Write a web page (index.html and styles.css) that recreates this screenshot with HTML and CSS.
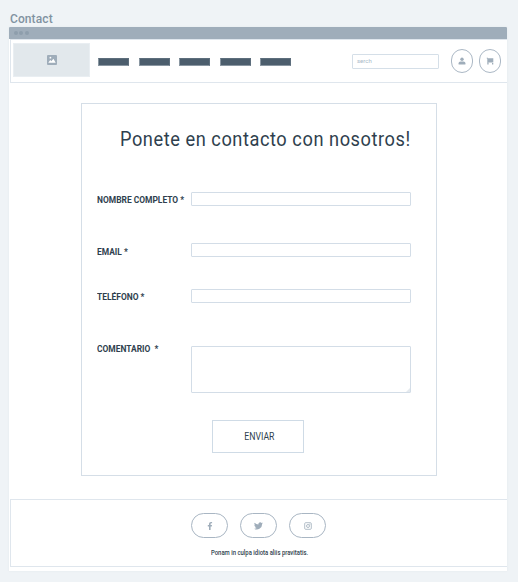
FILE: index.html
```html
<!DOCTYPE html>
<html lang="es">
<head>
<meta charset="utf-8">
<title>Contact</title>
<link rel="stylesheet" href="styles.css">
</head>
<body>
<h2 class="page-name"><span>Contact</span></h2>
<div class="window">
  <div class="titlebar"><i></i><i></i><i></i></div>
  <header class="header">
    <div class="logo">
      <svg width="10" height="10" viewBox="0 0 10 10"><rect width="10" height="10" rx="1" fill="#9fadba"/><path d="M1.300 7.800 3.200 5l1.200 1.200L6.400 3.800l2.300 4z" fill="#fff"/><circle cx="3.400" cy="2.700" r=".9" fill="#fff"/></svg>
    </div>
    <nav class="nav"><a></a><a></a><a></a><a></a><a></a></nav>
    <div class="search"><span>serch</span></div>
    <div class="actions">
      <a class="round"><svg width="8" height="8" viewBox="0 0 8 8" fill="#9fadba"><circle cx="4" cy="2.200" r="1.700"/><path d="M.6 7.400V6.200C.6 5 2.300 4.600 4 4.600s3.400.4 3.400 1.600v1.200z"/></svg></a>
      <a class="round"><svg width="8" height="8" viewBox="0 0 8 8" fill="#9fadba"><path d="M.7.8H2v.5h5.300v3.700H2.400v.6h4.900v2H6V6H2.600v1.600H1.300V1.500H.7z"/></svg></a>
    </div>
  </header>
  <main class="main">
    <form class="card">
      <h1 class="title"><span>Ponete en contacto con nosotros!</span></h1>
      <div class="row name"><label><span>NOMBRE COMPLETO *</span></label><div class="field"></div></div>
      <div class="row email"><label><span>EMAIL *</span></label><div class="field"></div></div>
      <div class="row phone"><label><span>TELÉFONO *</span></label><div class="field"></div></div>
      <div class="row comment"><label><span>COMENTARIO &nbsp;*</span></label><div class="field area"><svg width="4" height="4" viewBox="0 0 5 5"><path d="M5 0v5H0z" fill="#e4e9ee"/></svg></div></div>
      <div class="send"><span>ENVIAR</span></div>
    </form>
  </main>
  <footer class="footer">
    <div class="social">
      <a class="pill"><svg width="8" height="8" viewBox="0 0 8 8"><path d="M3 8V4.500H1.800V3.100H3V2.100C3 .7 3.800 0 5 0h1.100v1.300h-.7c-.6 0-.8.3-.8.8v1H6l-.2 1.400H4.600V8z" fill="#9fadba"/></svg></a>
      <a class="pill"><svg width="9" height="8" viewBox="0 0 24 20"><path d="M24 2.400a10 10 0 0 1-2.800.8A5 5 0 0 0 23.300.5a10 10 0 0 1-3.100 1.200A4.900 4.900 0 0 0 11.800 6.100 14 14 0 0 1 1.700 1a4.900 4.900 0 0 0 1.500 6.500 5 5 0 0 1-2.200-.6 4.900 4.900 0 0 0 3.900 4.900 5 5 0 0 1-2.200.1 4.900 4.900 0 0 0 4.600 3.400A10 10 0 0 1 0 17.300 14 14 0 0 0 21.500 4.900 10 10 0 0 0 24 2.400z" fill="#9fadba"/></svg></a>
      <a class="pill"><svg width="8" height="8" viewBox="0 0 8 8" fill="none" stroke="#9fadba" stroke-width=".8"><rect x=".7" y=".7" width="6.600" height="6.600" rx="1"/><circle cx="4" cy="4" r="1.500"/><circle cx="5.900" cy="2.100" r=".2"/></svg></a>
    </div>
    <p class="legal"><span>Ponam in culpa idiota aliis pravitatis.</span></p>
  </footer>
</div>
</body>
</html>
```
FILE: styles.css
```css
* { box-sizing: border-box; }
body { margin: 0; height: 582px; overflow: hidden; background: #eff3f6; font-family: Roboto, "Liberation Sans", sans-serif; color: #2f3f4e; }
h1, h2, p { margin: 0; font-weight: 400; }
svg { display: block; }
span { display: inline-block; white-space: nowrap; transform-origin: left center; }
.page-name { height: 27px; padding: 11px 0 0 10px; font-size: 12px; line-height: 16px; font-weight: 500; letter-spacing: .1px; color: #8192a1; }
.window { width: 498px; height: 544px; margin-left: 9px; background: #fff; border-radius: 1px 1px 0 0; box-shadow: 0 0 2px #e1e6eb; }
.titlebar { height: 12px; display: flex; gap: 1.500px; padding: 4px 0 0 4.500px; background: #9fadba; border-radius: 1px 1px 0 0; }
.titlebar i { width: 4px; height: 4px; border-radius: 50%; background: #8e9eac; }
.header { height: 44px; margin-left: 1px; display: flex; align-items: flex-start; border: 1px solid #dfe6ed; border-right: 0; }
.logo { width: 77px; height: 34px; margin: 3px 0 0 2px; background: #e2e8ec; border: 1px solid #e9eef2; display: flex; align-items: center; justify-content: center; }
.nav { display: flex; gap: 9.500px; margin: 18px 0 0 8px; }
.nav a { width: 31px; height: 8px; background: #4c5e6d; border: 1px solid #5d6e7c; border-left-color: #8a97a2; border-bottom-color: #8a97a2; }
.search { width: 87px; height: 15px; margin: 14px 0 0 61px; padding-left: 4px; border: 1px solid #d5dfe8; border-radius: 1px; font-size: 6px; line-height: 12px; color: #a8b9c8; }
.actions { display: flex; gap: 6px; margin: 9px 0 0 12px; }
.round { width: 22px; height: 24px; border: 1px solid #abb8c5; border-radius: 12px; display: flex; align-items: center; justify-content: center; }
.main { height: 416px; padding: 20px 0 0 72px; }
.card { width: 356px; height: 373px; padding: 23px 15px 0; border: 1px solid #d5dee7; }
.title { height: 65px; padding-left: 23px; font-size: 20px; line-height: 24px; letter-spacing: .6px; }
.title span { transform: scaleX(.911); }
.row { display: grid; grid-template-columns: 94px 220px; align-items: start; }
.row label { height: 14px; font-size: 9.500px; line-height: 12px; font-weight: 700; padding-top: 2px; }
.row span { transform: scaleX(.887); }
.field { height: 14px; border: 1px solid #d3dde7; border-radius: 1px; }
.name { height: 51px; }
.email { height: 46px; }
.phone { height: 57px; }
.comment { height: 74px; }
.email label { padding-top: 3px; }
.comment label { margin-top: -5px; }
.field.area { height: 47px; display: flex; align-items: flex-end; justify-content: flex-end; }
.send { width: 92px; height: 33px; margin-left: 115px; padding-left: 2px; border: 1px solid #cfdbe6; display: flex; align-items: center; justify-content: center; font-size: 10px; }
.send span { transform: scaleX(.87); transform-origin: center; }
.footer { height: 68px; margin-left: 1px; border: 1px solid #dfe6ed; border-right: 0; padding-top: 13px; }
.social { display: flex; gap: 12px; padding-left: 180px; }
.pill { width: 37px; height: 25px; border: 1px solid #a9b6c3; border-radius: 13px; display: flex; align-items: center; justify-content: center; }
.legal { height: 9px; margin-top: 11px; padding-left: 200px; font-size: 6.500px; line-height: 9px; font-weight: 500; }
.legal span { transform: scaleX(.91); }
```
